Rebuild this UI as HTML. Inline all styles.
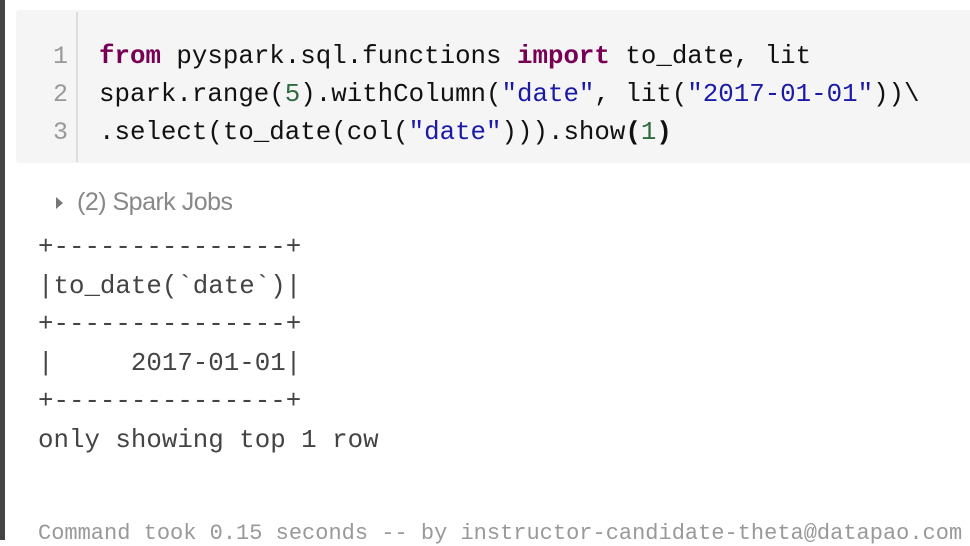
<!DOCTYPE html>
<html><head><style>
body{margin:0;width:970px;height:540px;background:#fff;position:relative;overflow:hidden;font-family:"Liberation Mono",monospace}
.bar{position:absolute;left:0;top:0;width:5px;height:540px;background:#444}
.code{position:absolute;left:16px;top:10px;width:960px;height:153px;background:#f5f5f5;border-radius:3px}
.gut{position:absolute;left:76px;top:12px;width:2px;height:150px;background:#ddd}
.ln{position:absolute;left:40px;width:28px;text-align:right;color:#999;font-size:25px}
.cl{position:absolute;left:99px;font-size:25.8px;color:#111;white-space:pre}
.k{color:#770055;font-weight:bold}.s{color:#1a1aa6}.n{color:#2e6b3e}
.out{position:absolute;left:38px;top:229px;font-size:25.8px;line-height:38.5px;color:#444;white-space:pre;margin:0;font-family:"Liberation Mono",monospace}
.jobs{position:absolute;left:77px;top:188px;font-family:"Liberation Sans",sans-serif;font-size:25px;color:#888;letter-spacing:-0.5px}
.tri{position:absolute;left:56px;top:197px;width:0;height:0;border-left:7px solid #777;border-top:6px solid transparent;border-bottom:6px solid transparent}
.cmd{position:absolute;left:38px;top:521px;font-size:22px;color:#999;white-space:pre}
</style></head><body>
<div class="bar"></div>
<div class="code"></div>
<div class="gut"></div>
<div class="ln" style="top:42px">1</div>
<div class="ln" style="top:80px">2</div>
<div class="ln" style="top:118px">3</div>
<div class="cl" style="top:42px"><span class="k">from</span> pyspark.sql.functions <span class="k">import</span> to_date, lit</div>
<div class="cl" style="top:80px">spark.range(<span class="n">5</span>).withColumn(<span class="s">"date"</span>, lit(<span class="s">"2017-01-01"</span>))\</div>
<div class="cl" style="top:118px">.select(to_date(col(<span class="s">"date"</span>))).show<b>(</b><span class="n">1</span><b>)</b></div>
<div class="tri"></div>
<div class="jobs">(2) Spark Jobs</div>
<pre class="out">+---------------+
|to_date(`date`)|
+---------------+
|     2017-01-01|
+---------------+
only showing top 1 row</pre>
<div class="cmd">Command took 0.15 seconds -- by instructor-candidate-theta@datapao.com</div>
</body></html>
